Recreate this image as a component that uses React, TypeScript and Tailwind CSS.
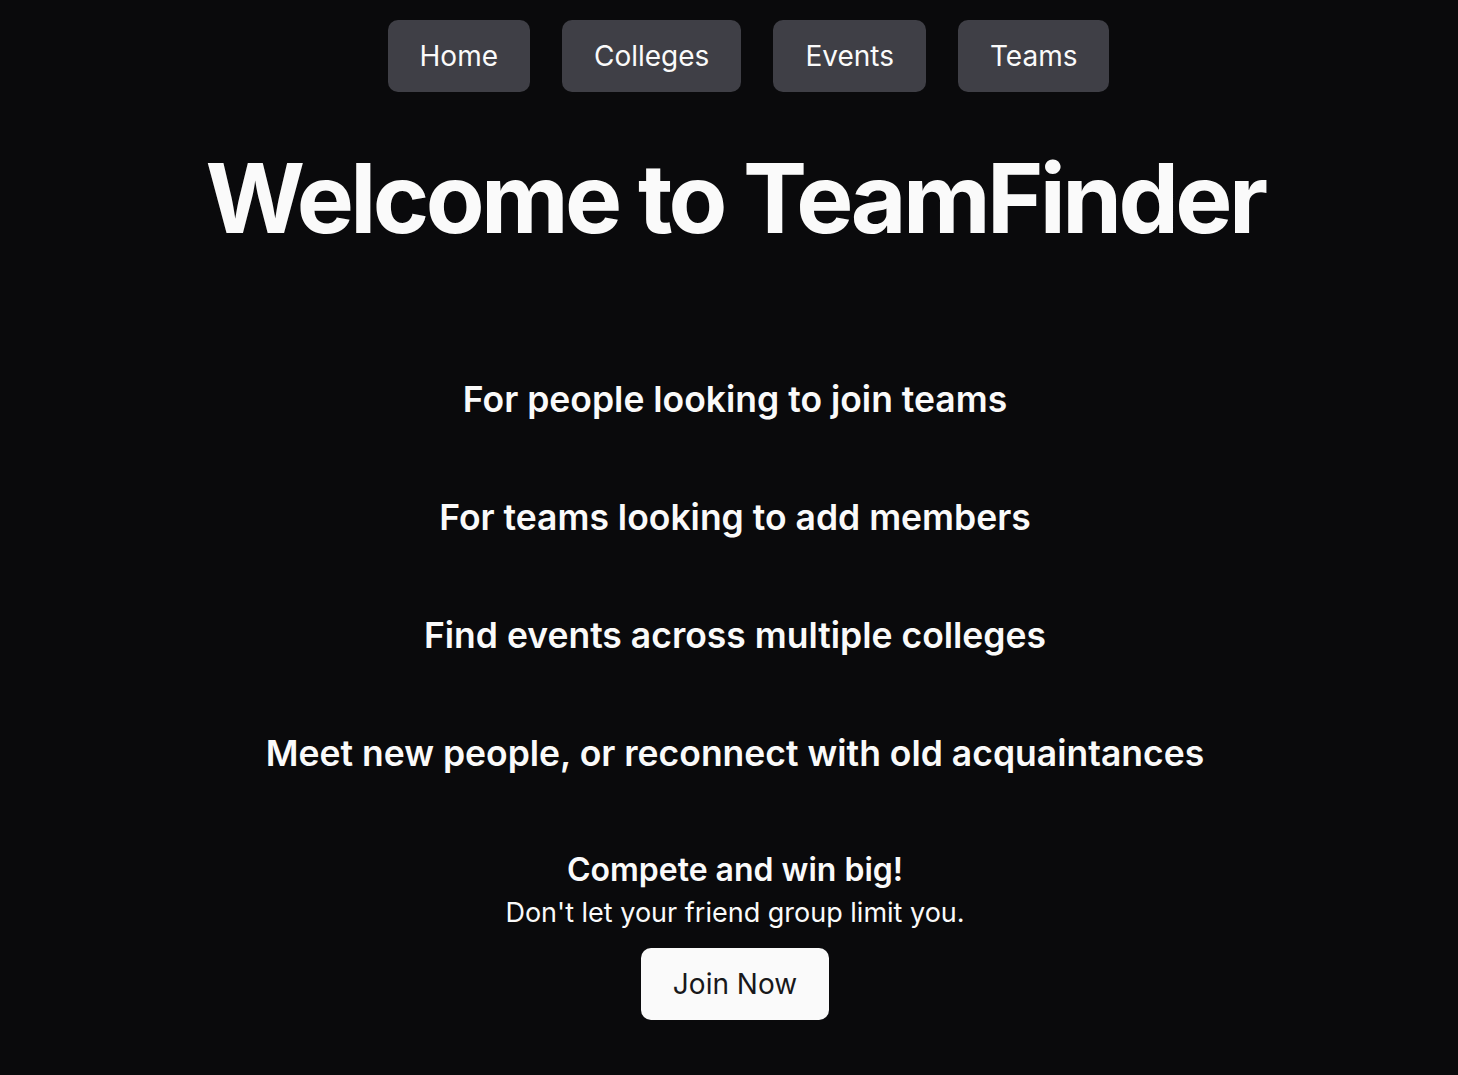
const navItems = ["Home", "Colleges", "Events", "Teams"];

const features = [
  "For people looking to join teams",
  "For teams looking to add members",
  "Find events across multiple colleges",
  "Meet new people, or reconnect with old acquaintances",
];

export default function App() {
  return (
    <div
      className="min-h-screen bg-[#0a0a0c] text-[#fafafa] pl-[12px]"
      style={{ fontFamily: "Inter, 'Noto Sans', sans-serif" }}
    >
      {/* Nav */}
      <nav className="flex justify-center gap-8 pt-5 pl-[27px]">
        {navItems.map((item) => (
          <button
            key={item}
            className="h-[72px] px-8 rounded-[10px] bg-[#3f3f46] text-[28px] text-[#fafafa]"
          >
            {item}
          </button>
        ))}
      </nav>

      {/* Hero */}
      <h1 className="mt-[58px] text-center text-8xl font-bold tracking-[-0.037em] leading-none">
        Welcome to TeamFinder
      </h1>

      <div className="mt-[134px] flex flex-col items-center gap-[78px]">
        {features.map((f) => (
          <h2 key={f} className="text-[35.5px] font-semibold leading-10 text-center">
            {f}
          </h2>
        ))}
      </div>

      {/* Call to action */}
      <div className="mt-[76px] flex flex-col items-center">
        <h3 className="text-[32px] font-semibold leading-10">Compete and win big!</h3>
        <p className="mt-[5px] text-[27px] leading-9">Don't let your friend group limit you.</p>
        <button className="mt-[17px] h-[72px] px-8 rounded-[10px] bg-[#fafafa] text-[#18181b] text-[28px]">
          Join Now
        </button>
      </div>
    </div>
  );
}
